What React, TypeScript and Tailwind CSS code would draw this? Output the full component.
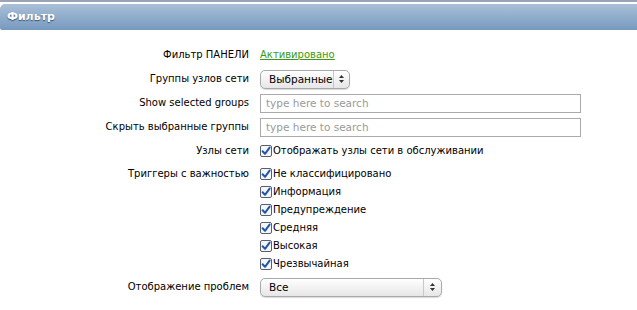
import React from "react";

const font = { fontFamily: '"DejaVu Sans", Verdana, sans-serif' };

function Check() {
  return (
    <svg width="12" height="12" viewBox="0 0 12 12" className="shrink-0">
      <rect x="0.5" y="0.5" width="11" height="11" rx="1.5" fill="#f4f6fa" stroke="#5a5f6a" />
      <path d="M2.6 6.2 L5 8.8 L9.6 2.6" fill="none" stroke="#2356a8" strokeWidth="2" strokeLinecap="round" strokeLinejoin="round" />
    </svg>
  );
}

function Arrows() {
  return (
    <svg width="7" height="10" viewBox="0 0 7 10">
      <path d="M3.5 1 L6 4 L1 4 Z" fill="#333" />
      <path d="M3.5 9 L6 6 L1 6 Z" fill="#333" />
    </svg>
  );
}

function Select({ value, width }: { value: string; width: string }) {
  return (
    <div
      className={`${width} h-[19px] flex items-center rounded-[5px] border border-[#a9a9a9] bg-gradient-to-b from-white to-[#e6e6e6] shadow-[0_1px_1px_rgba(0,0,0,0.15)]`}
    >
      <span className="flex-1 pl-[8px] text-[10.5px] text-black leading-none">{value}</span>
      <span className="h-full w-[18px] border-l border-[#c8c8c8] flex items-center justify-center">
        <Arrows />
      </span>
    </div>
  );
}

function Input() {
  return (
    <div className="w-[321px] h-[19px] border border-[#aaaaaa] bg-white flex items-center pl-[5px] text-[10.5px] text-[#9a9a9a] leading-none">
      type here to search
    </div>
  );
}

function Row({ label, children, h = "h-[24px]" }: { label: string; children: React.ReactNode; h?: string }) {
  return (
    <div className={`flex items-center ${h}`}>
      <div className="w-[249px] text-right text-[10px] text-black leading-none">{label}</div>
      <div className="pl-[11px] flex items-center">{children}</div>
    </div>
  );
}

const severities = [
  "Не классифицировано",
  "Информация",
  "Предупреждение",
  "Средняя",
  "Высокая",
  "Чрезвычайная",
];

export default function App() {
  return (
    <div className="w-[637px] h-[310px] bg-white overflow-hidden" style={font}>
      <div className="h-[2px] bg-[#9aa4b4]" />
      <div className="h-[2px]" />
      {/* Header */}
      <div className="h-[26px] rounded-tl-[5px] rounded-bl-[2px] bg-gradient-to-b from-[#a9c0d8] to-[#7799bf] flex items-center pl-[7px]">
        <span className="text-white font-bold text-[11px] [text-shadow:0_1px_1px_rgba(40,60,90,0.8)]">
          Фильтр
        </span>
      </div>

      <div className="pt-[13px] flex flex-col">
        <Row label="Фильтр ПАНЕЛИ">
          <span className="text-[10px] text-[#3a9a12] underline leading-none">Активировано</span>
        </Row>
        <Row label="Группы узлов сети">
          <Select value="Выбранные" width="w-[90px]" />
        </Row>
        <Row label="Show selected groups">
          <Input />
        </Row>
        <Row label="Скрыть выбранные группы">
          <Input />
        </Row>
        <Row label="Узлы сети">
          <div className="flex items-center gap-[1px] text-[10px] text-black leading-none">
            <Check />
            <span>Отображать узлы сети в обслуживании</span>
          </div>
        </Row>
        <div className="flex pt-[2px]">
          <div className="w-[249px] h-[18px] flex items-center justify-end text-[10px] text-black leading-none">
            Триггеры с важностью
          </div>
          <div className="pl-[11px] flex flex-col">
            {severities.map((s) => (
              <div key={s} className="h-[18px] flex items-center gap-[1px] text-[10px] text-black leading-none">
                <Check />
                <span>{s}</span>
              </div>
            ))}
          </div>
        </div>
        <div className="h-[2px]" />
        <Row label="Отображение проблем">
          <Select value="Все" width="w-[182px]" />
        </Row>
      </div>
    </div>
  );
}
